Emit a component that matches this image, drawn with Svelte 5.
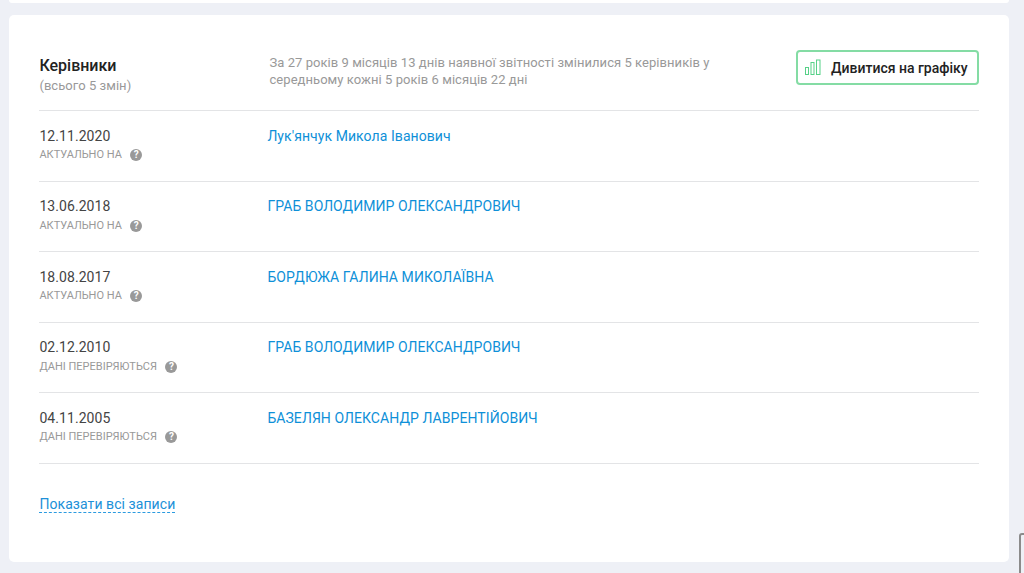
<script lang="ts">
	type Row = { date: string; status: string; name: string };

	const rows: Row[] = [
		{ date: '12.11.2020', status: 'АКТУАЛЬНО НА', name: "Лук'янчук Микола Іванович" },
		{ date: '13.06.2018', status: 'АКТУАЛЬНО НА', name: 'ГРАБ ВОЛОДИМИР ОЛЕКСАНДРОВИЧ' },
		{ date: '18.08.2017', status: 'АКТУАЛЬНО НА', name: 'БОРДЮЖА ГАЛИНА МИКОЛАЇВНА' },
		{ date: '02.12.2010', status: 'ДАНІ ПЕРЕВІРЯЮТЬСЯ', name: 'ГРАБ ВОЛОДИМИР ОЛЕКСАНДРОВИЧ' },
		{ date: '04.11.2005', status: 'ДАНІ ПЕРЕВІРЯЮТЬСЯ', name: 'БАЗЕЛЯН ОЛЕКСАНДР ЛАВРЕНТІЙОВИЧ' }
	];
</script>

<div class="page">
	<div class="prevCard"></div>

	<section class="card">
		<header class="head">
			<div class="titleCol">
				<h2>Керівники</h2>
				<p class="sub">(всього 5 змін)</p>
			</div>
			<p class="summary">
				За 27 років 9 місяців 13 днів наявної звітності змінилися 5 керівників у середньому кожні 5 років 6 місяців 22 дні
			</p>
			<button class="chartBtn">
				<svg width="18" height="18" viewBox="0 0 18 18" fill="none" stroke="#57d188" stroke-width="1">
					<rect x="1.5" y="8.5" width="3" height="7" />
					<rect x="7" y="3.5" width="3" height="12" />
					<rect x="12.5" y="1" width="3.5" height="14.5" />
				</svg>
				Дивитися на графіку
			</button>
		</header>

		{#each rows as row}
			<div class="row">
				<div class="dateCol">
					<div class="date">{row.date}</div>
					<div class="status">
						{row.status}
						<span class="hint">?</span>
					</div>
				</div>
				<a class="name" href="#top">{row.name}</a>
			</div>
		{/each}

		<a class="showAll" href="#top">Показати всі записи</a>
	</section>

	<div class="scrollTab"></div>
</div>

<style>
	:global(body) {
		background: #eef0f6;
	}
	.page {
		position: relative;
		height: 573px;
		overflow: hidden;
		padding: 0 15px 0 9px;
		box-sizing: border-box;
		font-family: Roboto, 'Noto Sans', sans-serif;
		background: #eef0f6;
	}
	.prevCard {
		height: 3px;
		background: #fff;
		border-radius: 0 0 5px 5px;
		margin-bottom: 12px;
	}
	.card {
		background: #fff;
		border-radius: 5px;
		height: 547px;
		box-sizing: border-box;
		padding: 0 30px 0 30.4px;
	}
	.head {
		display: flex;
		align-items: flex-start;
		height: 96px;
		box-sizing: border-box;
		padding-top: 36px;
		border-bottom: 1px solid #e3e4e6;
	}
	.titleCol {
		width: 230.1px;
		flex-shrink: 0;
	}
	h2 {
		margin: 5px 0 0;
		font-size: 16px;
		line-height: 20px;
		font-weight: 500;
		color: #222;
	}
	.sub {
		margin: 1px 0 0;
		font-size: 13px;
		line-height: 18px;
		color: #999;
		letter-spacing: 0.05px;
	}
	.summary {
		margin: 3px 0 0;
		width: 460px;
		font-size: 13px;
		line-height: 17px;
		color: #999;
		letter-spacing: 0.05px;
	}
	.chartBtn {
		margin-left: auto;
		display: flex;
		align-items: center;
		gap: 9px;
		height: 35px;
		margin-top: -1px;
		width: 183px;
		padding: 0 0 0 6px;
		box-sizing: border-box;
		background: #fff;
		border: 2px solid #84dca4;
		border-radius: 4px;
		font-family: inherit;
		font-size: 14px;
		font-weight: 500;
		color: #222;
		white-space: nowrap;
	}
	.row {
		display: flex;
		align-items: flex-start;
		height: 70.5px;
		box-sizing: border-box;
		padding-top: 14.75px;
		border-bottom: 1px solid #e3e4e6;
	}
	.dateCol {
		width: 228px;
		flex-shrink: 0;
	}
	.date {
		font-size: 14px;
		line-height: 20px;
		color: #444;
		letter-spacing: 0.07px;
	}
	.status {
		display: flex;
		align-items: center;
		gap: 8.5px;
		margin-top: 1.5px;
		font-size: 11px;
		line-height: 16px;
		color: #999;
	}
	.hint {
		width: 12px;
		height: 12px;
		border-radius: 50%;
		background: #999;
		color: #fff;
		font-size: 10px;
		font-weight: 700;
		line-height: 12px;
		text-align: center;
	}
	.name {
		font-size: 14px;
		line-height: 20px;
		color: #0e90d8;
		text-decoration: none;
		letter-spacing: 0.07px;
	}
	.showAll {
		display: inline-block;
		margin-top: 32px;
		font-size: 14px;
		line-height: 16px;
		color: #2090d8;
		text-decoration: none;
		border-bottom: 1px dashed #2b9be0;
		letter-spacing: 0.07px;
	}
	.scrollTab {
		position: absolute;
		left: 1019px;
		top: 533px;
		width: 20px;
		height: 60px;
		box-sizing: border-box;
		border: 2px solid #8b8b8b;
		border-radius: 3px;
		background: #eef0f6;
	}
</style>
